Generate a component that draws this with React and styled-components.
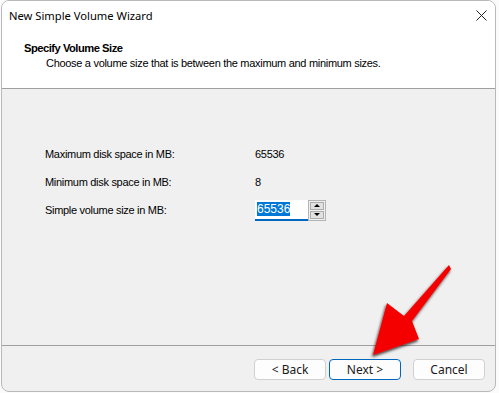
import React from "react"
import styled, { createGlobalStyle } from "styled-components"

const Global = createGlobalStyle`
  html, body {
    margin: 0;
    padding: 0;
    background: #fbfbfb;
  }
  body {
    font-family: "Segoe UI", "Noto Sans", "Liberation Sans", sans-serif;
  }
`

const Page = styled.div`
  width: 499px;
  height: 393px;
  padding-left: 1px;
  box-sizing: border-box;
`

const Window = styled.div`
  width: 495px;
  height: 392px;
  box-sizing: border-box;
  border: 1px solid #b9b9b9;
  border-radius: 8px;
  overflow: hidden;
  display: flex;
  flex-direction: column;
  background: #f0f0f0;
  position: relative;
`

const TitleBar = styled.div`
  height: 29px;
  background: #fff;
  display: flex;
  align-items: center;
  justify-content: space-between;
  padding: 0 8px 0 7px;
  font-size: 11.2px;
  color: #000;
`

const Header = styled.div`
  height: 59px;
  background: #fff;
  border-bottom: 1px solid #a0a0a0;
  padding: 11px 0 0 22px;
  box-sizing: border-box;
  font-family: "Liberation Sans", Arial, sans-serif;
  font-size: 11px;
  letter-spacing: -0.3px;
  color: #000;
`

const HeaderTitle = styled.div`
  font-weight: bold;
  font-size: 11.2px;
  letter-spacing: -0.5px;
  line-height: 15px;
`

const HeaderSub = styled.div`
  padding-left: 22px;
  line-height: 15px;
`

const Body = styled.div`
  flex: 1;
  padding: 51px 0 0 43px;
  font-family: "Liberation Sans", Arial, sans-serif;
  font-size: 11px;
  letter-spacing: -0.3px;
  color: #000;
`

const Grid = styled.div`
  display: grid;
  grid-template-columns: 210px auto;
  grid-auto-rows: 28px;
  align-items: center;
`

const Spin = styled.div`
  display: flex;
  align-items: stretch;
  height: 21px;
`

const SpinField = styled.div`
  width: 51px;
  background: #fff;
  border-bottom: 2px solid #0067c0;
  display: flex;
  align-items: center;
  padding-left: 2px;
  font-size: 12px;
  letter-spacing: 0;
`

const Selected = styled.span`
  background: #0078d7;
  color: #fff;
  line-height: 14px;
`

const SpinButtons = styled.div`
  width: 18px;
  box-sizing: border-box;
  border: 1px solid #b4b4b4;
  display: flex;
  flex-direction: column;
  gap: 1px;
  padding: 1px;
  background: #f0f0f0;
`

const SpinButton = styled.div`
  flex: 1;
  background: #e1e1e1;
  border: 1px solid #adadad;
  display: flex;
  align-items: center;
  justify-content: center;
  &::after {
    content: "";
    border-left: 3px solid transparent;
    border-right: 3px solid transparent;
    ${(p) => (p.$down ? "border-top: 3px solid #000;" : "border-bottom: 3px solid #000;")}
  }
`

const Footer = styled.div`
  height: 46px;
  border-top: 1px solid #a0a0a0;
  display: flex;
  align-items: flex-start;
  padding: 13px 0 0 252px;
  box-sizing: border-box;
`

const Button = styled.button`
  width: 72px;
  height: 21px;
  margin-right: ${(p) => p.$gap || 0}px;
  background: #fdfdfd;
  border: 1px solid ${(p) => (p.$primary ? "#0067c0" : "#d0d0d0")};
  border-radius: 4px;
  font-family: "Segoe UI", "Noto Sans", "Liberation Sans", sans-serif;
  font-size: 12px;
  color: #1a1a1a;
  padding: 0;
  line-height: 19px;
`

const Arrow = styled.svg`
  position: absolute;
  left: 360px;
  top: 258px;
  pointer-events: none;
`

export default function App() {
  return (
    <Page>
      <Global />
      <Window>
        <TitleBar>
          <span>New Simple Volume Wizard</span>
          <svg width="11" height="11" viewBox="0 0 11 11">
            <path d="M0.5 0.5 L10.5 10.5 M10.5 0.5 L0.5 10.5" stroke="#222" strokeWidth="1" />
          </svg>
        </TitleBar>
        <Header>
          <HeaderTitle>Specify Volume Size</HeaderTitle>
          <HeaderSub>Choose a volume size that is between the maximum and minimum sizes.</HeaderSub>
        </Header>
        <Body>
          <Grid>
            <span>Maximum disk space in MB:</span>
            <span>65536</span>
            <span>Minimum disk space in MB:</span>
            <span>8</span>
            <span>Simple volume size in MB:</span>
            <Spin>
              <SpinField>
                <Selected>65536</Selected>
              </SpinField>
              <SpinButtons>
                <SpinButton />
                <SpinButton $down />
              </SpinButtons>
            </Spin>
          </Grid>
        </Body>
        <Footer>
          <Button $gap={3}>&lt; Back</Button>
          <Button $primary $gap={12}>Next &gt;</Button>
          <Button>Cancel</Button>
        </Footer>
        <Arrow width="100" height="105" viewBox="0 0 100 105">
          <defs>
            <filter id="sh" x="-20%" y="-20%" width="140%" height="140%">
              <feDropShadow dx="-1" dy="2" stdDeviation="1.5" floodColor="#000" floodOpacity="0.8" />
            </filter>
          </defs>
          <path
            d="M87 6 L89 10 L50 62 L57 80 L11 96 L25 44 L42 57 Z"
            fill="#f50000"
            filter="url(#sh)"
          />
        </Arrow>
      </Window>
    </Page>
  )
}
